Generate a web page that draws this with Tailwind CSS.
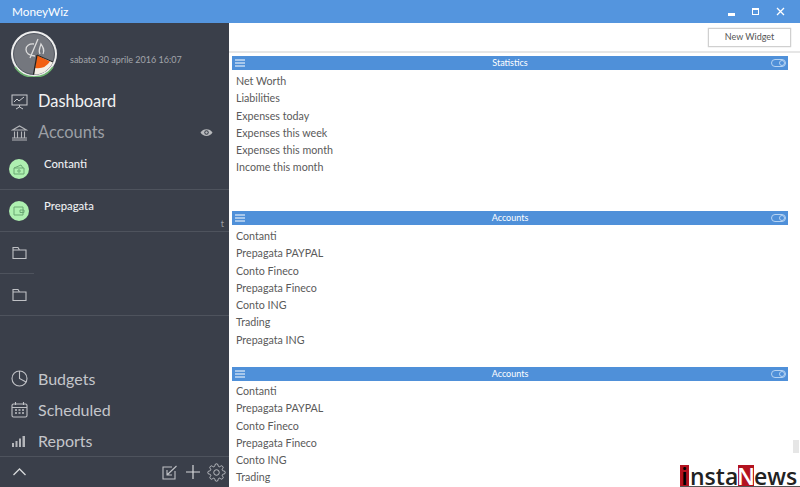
<!DOCTYPE html>
<html lang="en">
<head>
    <meta charset="UTF-8">
    <title>MoneyWiz</title>
    <script src="https://cdn.jsdelivr.net/npm/@tailwindcss/browser@4"></script>
</head>
<body class="font-['Lato',sans-serif] antialiased">
<div class="w-[800px] h-[487px] overflow-hidden flex flex-col relative bg-white">
    <!-- Title bar -->
    <div class="h-[23px] shrink-0 bg-[#5495de] text-white flex items-center justify-between pl-[12px] pr-[15px]">
        <span class="text-[11.8px]">MoneyWiz</span>
        <div class="flex items-center gap-[17px]">
            <div class="w-[7px] h-[3px] bg-white mt-[5px]"></div>
            <div class="w-[7px] h-[7px] border border-white border-t-[2px]"></div>
            <svg width="9" height="9" viewBox="0 0 9 9" stroke="white" stroke-width="1.3"><path d="M1 1l7 7M8 1l-7 7"/></svg>
        </div>
    </div>

    <div class="flex flex-1 min-h-0">
        <!-- Sidebar -->
        <div class="w-[229px] shrink-0 bg-[#3a3f4a] flex flex-col">
            <div class="h-[62px] shrink-0 flex items-center pl-[11px]">
                <svg width="46" height="46" viewBox="0 0 46 46">
                    <circle cx="23" cy="23" r="23" fill="#ededed"/>
                    <path d="M4 36a23 23 0 0 0 38 0" fill="none" stroke="#6fb572" stroke-width="1.500"/>
                    <circle cx="23" cy="23" r="20.500" fill="#74777e"/>
                    <circle cx="23" cy="23" r="20.500" fill="none" stroke="#3a3f4a" stroke-width="0.800"/>
                    <path d="M26 24L42 31A20.500 20.500 0 0 1 23 43.500Z" fill="#f4efe6"/>
                    <path d="M26 24L39 30.500A15 15 0 0 1 24 37Z" fill="#f25f12"/>
                    <path d="M26 24L22.500 43.500" stroke="#222" stroke-width="1.300"/>
                    <path d="M26 24L42 31" stroke="#222" stroke-width="1"/>
                    <path d="M24 25c-6 0-9-3-9-6.500s3-6 8-5.500M19 27l8-19M29 23c-2-4 0-6 1-10 2 3 4 6 2 10" fill="none" stroke="#dcdcdc" stroke-width="1.300"/>
                </svg>
                <span class="text-[9px] text-[#a2a5ab] ml-[13px] mt-[12px]">sabato 30 aprile 2016 16:07</span>
            </div>

            <div class="h-[31px] pt-[2px] shrink-0 flex items-center pl-[11px]">
                <svg width="17" height="16" viewBox="0 0 17 16" fill="none" stroke="#c8cacd" stroke-width="1"><rect x="1" y="1" width="15" height="10"/><path d="M3 8l3-3 2 2 5-4M8.500 11v2M5 15l3.500-2 3.500 2"/></svg>
                <span class="text-[16.4px] text-[#f2f3f4] ml-[10px] leading-none">Dashboard</span>
            </div>
            <div class="h-[31px] pt-[2px] shrink-0 flex items-center pl-[11px] pr-[16px]">
                <svg width="17" height="16" viewBox="0 0 17 16" fill="none" stroke="#b4b6ba" stroke-width="1.100"><path d="M1.500 5L8.500 1l7 4zM3.500 6.500v6M6.500 6.500v6M10.500 6.500v6M13.500 6.500v6M1 13h15M1 15h15"/></svg>
                <span class="text-[16.4px] text-[#9c9fa5] ml-[10px] leading-none">Accounts</span>
                <svg class="ml-auto" width="13" height="9" viewBox="0 0 13 9"><path d="M0.500 4.500C3 0 10 0 12.500 4.500 10 9 3 9 0.500 4.500Z" fill="#b8babd"/><circle cx="6.500" cy="4.500" r="2.200" fill="#3a3f4a"/><circle cx="6.500" cy="4.500" r="1.200" fill="#b8babd"/></svg>
            </div>

            <!-- Account rows -->
            <div class="h-[43px] shrink-0 flex items-start pl-[9px] border-b border-[#4e535d]">
                <div class="w-[20px] h-[20px] rounded-full bg-[#aef0b0] flex items-center justify-center mt-[12px]">
                    <svg width="12" height="11" viewBox="0 0 12 11" fill="none" stroke="#6aa873" stroke-width="1"><path d="M1 4l7-3 2 3M1 4h10v6H1z"/><circle cx="6" cy="7" r="1.200"/></svg>
                </div>
                <span class="text-[11.300px] font-medium text-[#eef0f2] ml-[15px] mt-[9px]">Contanti</span>
            </div>
            <div class="h-[42px] shrink-0 flex items-start pl-[9px] border-b border-[#4e535d] relative">
                <div class="w-[20px] h-[20px] rounded-full bg-[#aef0b0] flex items-center justify-center mt-[11px]">
                    <svg width="12" height="10" viewBox="0 0 12 10" fill="none" stroke="#6aa873" stroke-width="1"><path d="M1 1h9v8H1zM7 4h4v2.500H7z"/></svg>
                </div>
                <span class="text-[11.300px] font-medium text-[#eef0f2] ml-[15px] mt-[8px]">Prepagata</span>
                <span class="absolute right-[5px] bottom-[1px] text-[9px] text-[#9c9fa5]">t</span>
            </div>

            <!-- Folders -->
            <div class="h-[42px] shrink-0 flex items-center pl-[12px] relative">
                <svg width="15" height="14" viewBox="0 0 15 14" fill="none" stroke="#bfc1c5" stroke-width="1.100"><path d="M1 12.500V1.500h5l1.500 2.500H14v8.500zM1 4h6.500"/></svg>
                <div class="absolute left-0 bottom-0 w-[34px] h-px bg-[#4e535d]"></div>
            </div>
            <div class="h-[42px] shrink-0 flex items-center pl-[12px] border-b border-[#4e535d]">
                <svg width="15" height="14" viewBox="0 0 15 14" fill="none" stroke="#bfc1c5" stroke-width="1.100"><path d="M1 12.500V1.500h5l1.500 2.500H14v8.500zM1 4h6.500"/></svg>
            </div>

            <div class="flex-1"></div>

            <div class="flex flex-col shrink-0">
                <div class="h-[31px] flex items-center pl-[11px]">
                    <svg width="17" height="17" viewBox="0 0 17 17" fill="none" stroke="#c0c2c6" stroke-width="1.100"><circle cx="8.500" cy="8.500" r="7.500"/><path d="M8.500 1v7.500l6.500 3.500"/></svg>
                    <span class="text-[16px] text-[#c4c6ca] ml-[10px] leading-none">Budgets</span>
                </div>
                <div class="h-[31px] flex items-center pl-[11px]">
                    <svg width="17" height="16" viewBox="0 0 17 16" fill="none" stroke="#c0c2c6" stroke-width="1.100"><rect x="1" y="2" width="15" height="13" rx="1.500"/><path d="M1 5.500h15M4.500 0v3M12.500 0v3"/><path d="M4 8h2M7.500 8h2M11 8h2M4 11h2M7.500 11h2M11 11h2" stroke-width="1.400"/></svg>
                    <span class="text-[16px] text-[#c4c6ca] ml-[10px] leading-none">Scheduled</span>
                </div>
                <div class="h-[31px] flex items-center pl-[12px]">
                    <svg width="14" height="12" viewBox="0 0 14 12" fill="#b4b6ba"><rect x="0" y="8" width="2" height="4"/><rect x="3.500" y="6" width="2" height="6"/><rect x="7" y="3.500" width="2" height="8.500"/><rect x="10.500" y="1" width="2.500" height="11"/></svg>
                    <span class="text-[16px] text-[#c4c6ca] ml-[12px] leading-none">Reports</span>
                </div>
            </div>

            <!-- Bottom toolbar -->
            <div class="h-[31px] shrink-0 border-t border-[#4e535d] flex items-center pl-[13px] pr-[3px]">
                <svg width="13" height="8" viewBox="0 0 13 8" fill="none" stroke="#d6d8da" stroke-width="1.300"><path d="M0.500 7L6.500 1l6 6"/></svg>
                <div class="ml-auto flex items-center">
                    <svg class="mr-[9px]" width="15" height="15" viewBox="0 0 15 15" fill="none" stroke="#c0c2c6" stroke-width="1.100"><path d="M10 2H1v12h12V6M14.500 1L5.500 9.500M5 5v5h5"/></svg>
                    <svg class="mr-[7px]" width="14" height="14" viewBox="0 0 14 14" stroke="#d6d8da" stroke-width="1.200"><path d="M7 0v14M0 7h14"/></svg>
                    <svg width="19" height="19" viewBox="0 0 24 24" fill="none" stroke="#c0c2c6" stroke-width="1.200"><circle cx="12" cy="12" r="3.500"/><path d="M19.4 15a1.65 1.65 0 0 0 .33 1.82l.06.06a2 2 0 0 1 0 2.83 2 2 0 0 1-2.83 0l-.06-.06a1.65 1.65 0 0 0-1.82-.33 1.65 1.65 0 0 0-1 1.51V21a2 2 0 0 1-2 2 2 2 0 0 1-2-2v-.09A1.65 1.65 0 0 0 9 19.4a1.65 1.65 0 0 0-1.82.33l-.06.06a2 2 0 0 1-2.83 0 2 2 0 0 1 0-2.83l.06-.06a1.65 1.65 0 0 0 .33-1.82 1.65 1.65 0 0 0-1.51-1H3a2 2 0 0 1-2-2 2 2 0 0 1 2-2h.09A1.65 1.65 0 0 0 4.600 9a1.65 1.65 0 0 0-.33-1.82l-.06-.06a2 2 0 0 1 0-2.83 2 2 0 0 1 2.83 0l.06.06a1.65 1.65 0 0 0 1.82.33H9a1.65 1.65 0 0 0 1-1.51V3a2 2 0 0 1 2-2 2 2 0 0 1 2 2v.09a1.65 1.65 0 0 0 1 1.51 1.65 1.65 0 0 0 1.82-.33l.06-.06a2 2 0 0 1 2.83 0 2 2 0 0 1 0 2.83l-.06.06a1.65 1.65 0 0 0-.33 1.82V9a1.65 1.65 0 0 0 1.51 1H21a2 2 0 0 1 2 2 2 2 0 0 1-2 2h-.09a1.65 1.65 0 0 0-1.51 1z"/></svg>
                </div>
            </div>
        </div>

        <!-- Main -->
        <div class="flex-1 min-w-0 flex flex-col">
            <div class="h-[30px] shrink-0 border-b-2 border-[#e6e6e6] flex items-center justify-end pr-[9px]">
                <button class="w-[83px] h-[19px] border border-[#d0d0d0] text-[9px] text-[#555] shadow-[0_0_1px_#bbb]">New Widget</button>
            </div>

            <div class="pl-[3px] pr-[12px] pt-[3px]">
                <!-- Statistics -->
                <div class="h-[155px]">
                    <div class="h-[14px] bg-[#4f90d9] text-white text-[9px] flex items-center justify-center relative">
                        Statistics
                        <svg class="absolute left-[3px] top-[3px]" width="10" height="8" viewBox="0 0 10 8" stroke="white"><path d="M0 1h10M0 4h10M0 7h10"/></svg>
                        <div class="absolute right-[2px] top-[3px] w-[15px] h-[8px] rounded-full border border-[#b5d3f3] flex items-center justify-end"><div class="w-[6px] h-[6px] rounded-full border border-[#b5d3f3]"></div></div>
                    </div>
                    <ul class="pl-[4px] pt-[2px] text-[10.700px] leading-[17.3px] text-[#5a5a5a]">
                        <li>Net Worth</li>
                        <li>Liabilities</li>
                        <li>Expenses today</li>
                        <li>Expenses this week</li>
                        <li>Expenses this month</li>
                        <li>Income this month</li>
                    </ul>
                </div>
                <!-- Accounts -->
                <div class="h-[156px]">
                    <div class="h-[14px] bg-[#4f90d9] text-white text-[9px] flex items-center justify-center relative">
                        Accounts
                        <svg class="absolute left-[3px] top-[3px]" width="10" height="8" viewBox="0 0 10 8" stroke="white"><path d="M0 1h10M0 4h10M0 7h10"/></svg>
                        <div class="absolute right-[2px] top-[3px] w-[15px] h-[8px] rounded-full border border-[#b5d3f3] flex items-center justify-end"><div class="w-[6px] h-[6px] rounded-full border border-[#b5d3f3]"></div></div>
                    </div>
                    <ul class="pl-[4px] pt-[2px] text-[10.700px] leading-[17.3px] text-[#5a5a5a]">
                        <li>Contanti</li>
                        <li>Prepagata PAYPAL</li>
                        <li>Conto Fineco</li>
                        <li>Prepagata Fineco</li>
                        <li>Conto ING</li>
                        <li>Trading</li>
                        <li>Prepagata ING</li>
                    </ul>
                </div>
                <!-- Accounts -->
                <div>
                    <div class="h-[14px] bg-[#4f90d9] text-white text-[9px] flex items-center justify-center relative">
                        Accounts
                        <svg class="absolute left-[3px] top-[3px]" width="10" height="8" viewBox="0 0 10 8" stroke="white"><path d="M0 1h10M0 4h10M0 7h10"/></svg>
                        <div class="absolute right-[2px] top-[3px] w-[15px] h-[8px] rounded-full border border-[#b5d3f3] flex items-center justify-end"><div class="w-[6px] h-[6px] rounded-full border border-[#b5d3f3]"></div></div>
                    </div>
                    <ul class="pl-[4px] pt-[1px] text-[10.700px] leading-[17.3px] text-[#5a5a5a]">
                        <li>Contanti</li>
                        <li>Prepagata PAYPAL</li>
                        <li>Conto Fineco</li>
                        <li>Prepagata Fineco</li>
                        <li>Conto ING</li>
                        <li>Trading</li>
                    </ul>
                </div>
            </div>
        </div>
    </div>

    <!-- Scrollbar thumb -->
    <div class="absolute right-[1px] top-[440px] w-[6px] h-[13px] bg-[#e6e6e6]"></div>

    <!-- Watermark -->
    <div class="absolute left-[680px] right-0 bottom-0 h-[22px] bg-white flex items-start text-[23px] leading-[22px] font-semibold font-['Open_Sans',sans-serif] text-[#222] border-b border-[#555]">
        <span class="bg-[#b3121f] text-black w-[9px] h-[21px] flex justify-center">i</span><span class="w-[49px] pl-[1px]">nsta</span><span class="bg-[#b3121f] text-white w-[16px] h-[21px] flex justify-center">N</span><span>ews</span>
    </div>
</div>
</body>
</html>
